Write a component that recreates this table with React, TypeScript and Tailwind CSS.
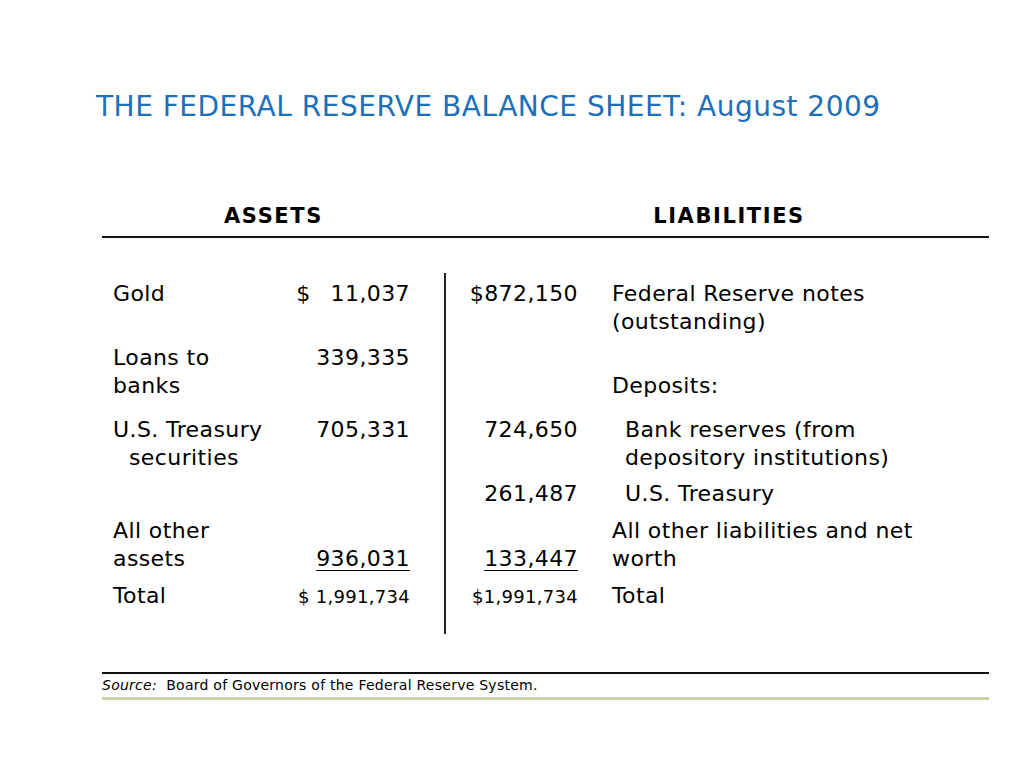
const body = { fontFamily: '"DejaVu Sans", Verdana, sans-serif' };

type Row = {
  label: React.ReactNode;
  asset?: React.ReactNode;
  liab?: React.ReactNode;
  liabLabel?: React.ReactNode;
  h: string;
};

const rows: Row[] = [
  {
    label: "Gold",
    asset: (
      <>
        $<span className="ml-[20px]">11,037</span>
      </>
    ),
    liab: "$872,150",
    liabLabel: (
      <>
        Federal Reserve notes
        <br />
        (outstanding)
      </>
    ),
    h: "h-[64px]",
  },
  {
    label: (
      <>
        Loans to
        <br />
        banks
      </>
    ),
    asset: "339,335",
    liabLabel: (
      <>
        <br />
        Deposits:
      </>
    ),
    h: "h-[72px]",
  },
  {
    label: (
      <>
        U.S. Treasury
        <br />
        <span className="pl-[16px]">securities</span>
      </>
    ),
    asset: "705,331",
    liab: "724,650",
    liabLabel: (
      <div className="pl-[13px]">
        Bank reserves (from
        <br />
        depository institutions)
      </div>
    ),
    h: "h-[64px]",
  },
  {
    label: "",
    liab: "261,487",
    liabLabel: <div className="pl-[13px]">U.S. Treasury</div>,
    h: "h-[37px]",
  },
  {
    label: (
      <>
        All other
        <br />
        assets
      </>
    ),
    asset: (
      <>
        <br />
        <span className="underline underline-offset-[4px] decoration-1">936,031</span>
      </>
    ),
    liab: (
      <>
        <br />
        <span className="underline underline-offset-[4px] decoration-1">133,447</span>
      </>
    ),
    liabLabel: (
      <>
        All other liabilities and net
        <br />
        worth
      </>
    ),
    h: "h-[65px]",
  },
  {
    label: "Total",
    asset: <span className="text-[18px] leading-[22px] tracking-[0.3px]">$ 1,991,734</span>,
    liab: <span className="text-[18px] leading-[22px] tracking-[0.3px]">$1,991,734</span>,
    liabLabel: "Total",
    h: "h-[28px]",
  },
];

export default function App() {
  return (
    <main className="min-h-screen w-[1024px] h-[768px] bg-white text-black overflow-hidden" style={body}>
      <div className="ml-[102px] w-[887px]">
        <h1 className="pt-[91px] -ml-[6px] text-[28px] leading-[32px] tracking-[0.5px] text-[#1d6fb8] whitespace-nowrap">
          THE FEDERAL RESERVE BALANCE SHEET: August 2009
        </h1>

        <div className="mt-[81px] flex text-[21px] leading-[24px] font-bold tracking-[1.6px]">
          <div className="w-[343px] text-center">ASSETS</div>
          <div className="flex-1 pl-[24px] text-center">LIABILITIES</div>
        </div>
        <div className="mt-[8px] h-[2px] bg-[#111]" />

        <div className="mt-[35px] grid grid-cols-[11px_180px_117px_34px_2px_132px_34px_1fr] text-[22px] leading-[28px] tracking-[0.4px]">
          <div className="col-start-5 row-start-1 row-span-8 bg-[#222]" />
          <div className="col-span-8 h-[7px] col-start-1 row-start-1" />
          {rows.map((r, i) => (
            <div key={i} className="contents">
              <div className={`col-start-2 whitespace-nowrap ${r.h}`}>{r.label}</div>
              <div className={`col-start-3 text-right whitespace-nowrap ${r.h}`}>{r.asset}</div>
              <div className={`col-start-6 text-right whitespace-nowrap ${r.h}`}>{r.liab}</div>
              <div className={`col-start-8 whitespace-nowrap ${r.h}`}>{r.liabLabel}</div>
            </div>
          ))}
          <div className="col-start-1 col-span-4 h-[24px]" />
        </div>

        <div className="mt-[38px] h-[2px] bg-[#111]" />
        <p className="mt-[3px] text-[14px] leading-[17px] tracking-[0.25px]">
          <span className="italic">Source:</span>&nbsp; Board of Governors of the Federal Reserve System.
        </p>
        <div className="mt-[3px] h-[3px] bg-[#cfd0a8]" />
      </div>
    </main>
  );
}
